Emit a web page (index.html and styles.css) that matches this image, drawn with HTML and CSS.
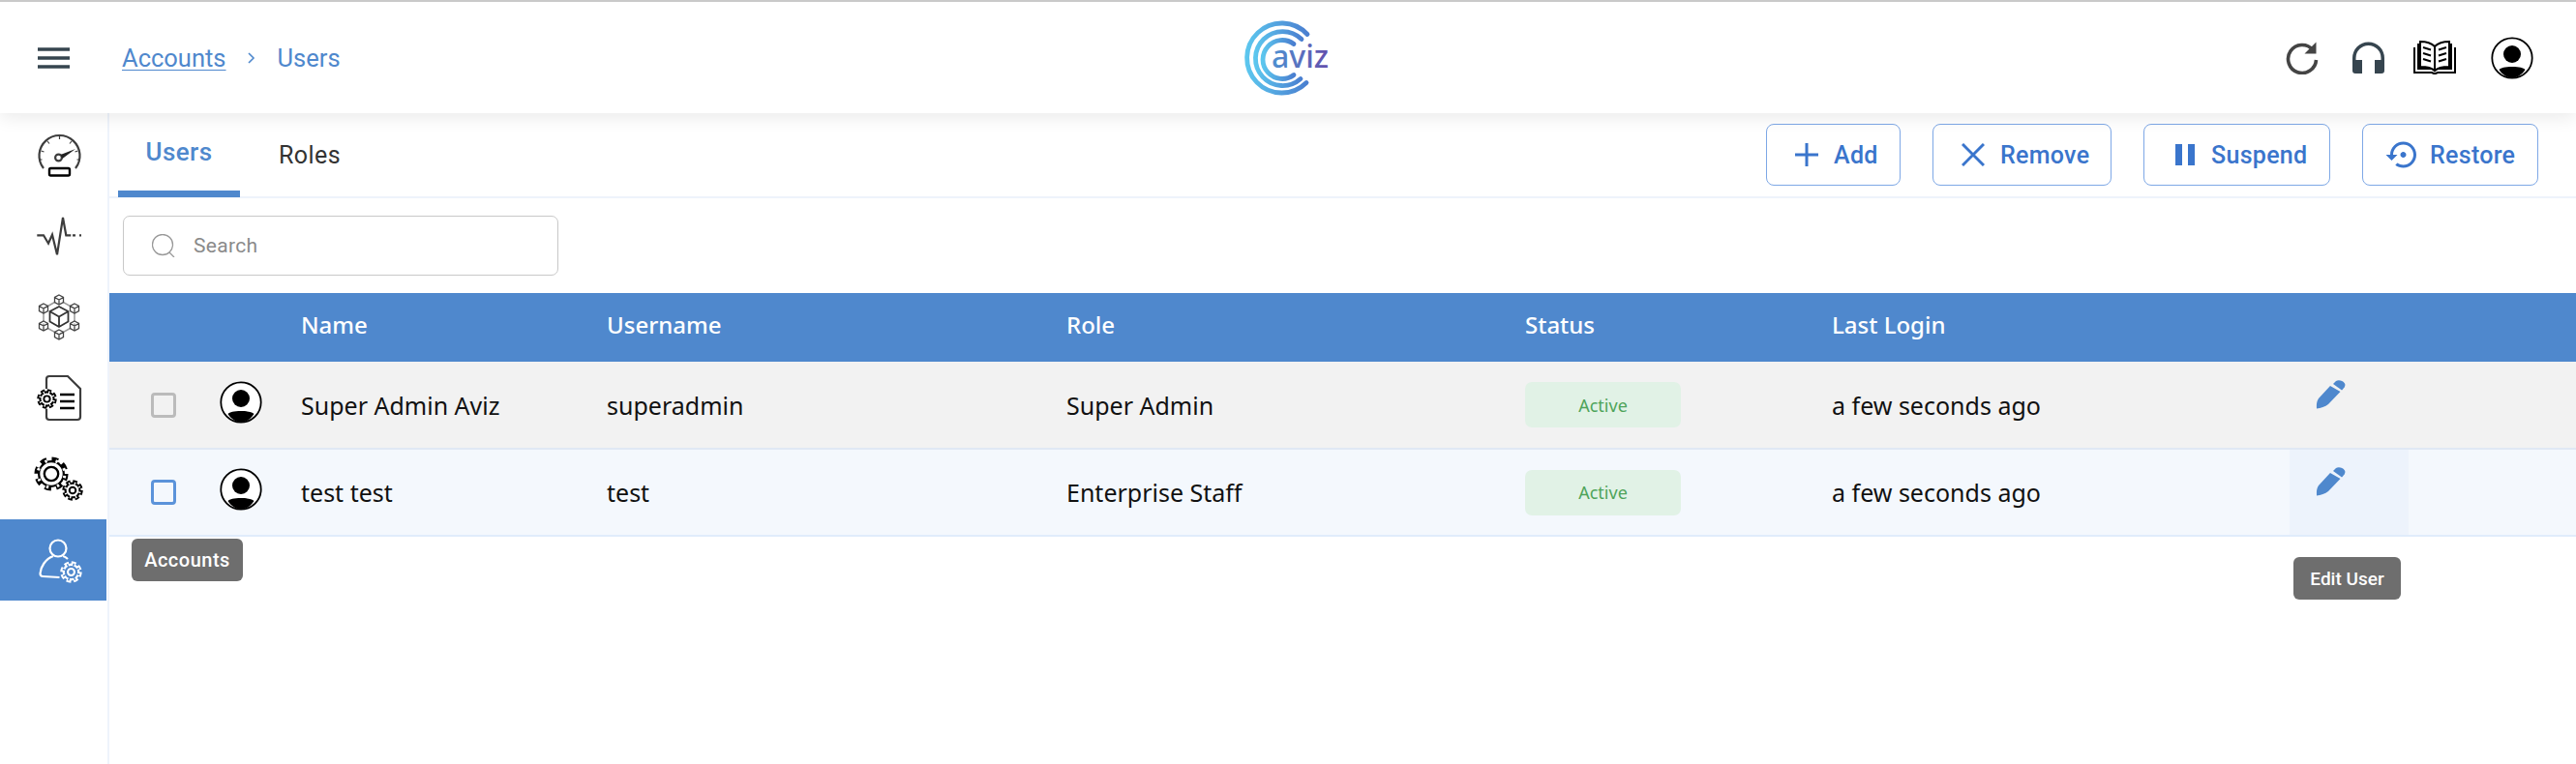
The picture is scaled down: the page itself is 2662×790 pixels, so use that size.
FILE: index.html
```html
<!DOCTYPE html>
<html lang="en">
<head>
<meta charset="utf-8">
<title>Users</title>
<link rel="stylesheet" href="styles.css">
</head>
<body>
<svg class="defs" width="0" height="0" aria-hidden="true">
  <defs>
    <linearGradient id="logoArc" x1="0" y1="0" x2="1" y2="0">
      <stop offset="0" stop-color="#5cc6ee"/><stop offset="1" stop-color="#4a7fd0"/>
    </linearGradient>
    <linearGradient id="logoText" gradientUnits="userSpaceOnUse" x1="1318" y1="0" x2="1374" y2="0">
      <stop offset="0" stop-color="#4f8fd0"/><stop offset="1" stop-color="#6350ad"/>
    </linearGradient>
    <symbol id="gear-lg" viewBox="0 0 40 40">
      <circle class="gear-ink" cx="20" cy="20" r="15.500"/>
      <circle class="gear-teeth" cx="20" cy="20" r="16" stroke-width="7" stroke-dasharray="7 5.570"/>
      <circle class="gear-bg" cx="20" cy="20" r="13"/>
      <circle class="gear-hole" cx="20" cy="20" r="15.500" stroke-width="3.400" stroke-dasharray="2.600 9.970" stroke-dashoffset="-2.200"/>
      <circle class="gear-ring" cx="20" cy="20" r="8" stroke-width="2.600"/>
    </symbol>
    <symbol id="gear-sm" viewBox="0 0 40 40">
      <circle class="gear-ink" cx="20" cy="20" r="15.500"/>
      <circle class="gear-teeth" cx="20" cy="20" r="16" stroke-width="7" stroke-dasharray="8 4.570"/>
      <circle class="gear-bg" cx="20" cy="20" r="11.500"/>
      <circle class="gear-hole" cx="20" cy="20" r="13.500" stroke-width="5" stroke-dasharray="2.400 8.200" stroke-dashoffset="-2.800"/>
      <circle class="gear-ring" cx="20" cy="20" r="6" stroke-width="3.600"/>
    </symbol>
    <symbol id="avatar" viewBox="0 0 44 44">
      <circle cx="22" cy="22" r="20.700" fill="#fff" stroke="#000" stroke-width="1.800"/>
      <circle cx="22" cy="18" r="9" fill="#000"/>
      <path fill="#000" d="M8.500 34c2-2 6-3 13.500-3s11.500 1 13.500 3C32 39.500 27 42.500 22 42.500S12 39.500 8.500 34z"/>
    </symbol>
    <symbol id="pencil" viewBox="0 0 31 30">
      <path fill="#4f88cd" d="M15 6l10.500 6L13 25c-3 2.500-8 4-12 4.500 0-3.500-.5-6.500 2-10.500z"/>
      <path fill="#4f88cd" d="M18 4l3-3c2-1.500 7-1 9 2.500 1 2 0 4-2 6L27 10.500z"/>
    </symbol>
    <path id="cube" d="M0-5l4.500 2.500v5L0 5l-4.500-2.500v-5zM-4.500-2.500L0 0l4.500-2.500M0 0v5"/>
  </defs>
</svg>

<header class="topbar">
  <div class="top-left">
    <svg class="menu-icon" viewBox="0 0 33 22"><path d="M0 2h33M0 11h33M0 20h33"/></svg>
    <nav class="crumbs">
      <a class="crumb-link">Accounts</a>
      <svg class="crumb-sep" viewBox="0 0 8 12"><path d="M1 1l5 5-5 5"/></svg>
      <span>Users</span>
    </nav>
  </div>
  <svg class="logo" viewBox="1285 18.500 92 82" role="img" aria-label="aviz">
    <g class="logo-arcs">
      <path d="M1353 35a36 36 0 1 0-1 50"/>
      <path d="M1347 40a28 28 0 1 0-1 41"/>
      <path d="M1339 45a20 20 0 1 0 0 32"/>
    </g>
    <text class="logo-text" x="1316" y="69">aviz</text>
  </svg>
  <div class="top-right">
    <svg class="ic-refresh" viewBox="0 0 34 34"><path class="refresh-arc" d="M28 8.500A14.500 14.500 0 1 0 31.500 19"/><path class="refresh-head" d="M31.500 0.500v12h-12z"/></svg>
    <svg class="ic-headset" viewBox="0 0 33 33"><path d="M0 30V17a16.500 16.500 0 0 1 33 0v13a3 3 0 0 1-3 3h-7V19h6.500v-2a13 13 0 0 0-26 0v2H10v14H3a3 3 0 0 1-3-3z"/></svg>
    <svg class="ic-book" viewBox="0 0 44 35"><path class="book-out" d="M5 3v26h13c2 0 3 1 4 2 1-1 2-2 4-2h13V3M1 7v26h18l3 1.500L25 33h18V7"/><path class="book-page" d="M22 31V6c-3-3-9-5-15-5v26c6 0 12 1 15 4 3-3 9-4 15-4V1c-6 0-12 2-15 5"/><path class="book-line" d="M10 7l8 2.500M10 13l8 2.500M10 19l8 2.500M34 7l-8 2.500M34 13l-8 2.500M34 19l-8 2.500"/></svg>
    <svg class="ic-avatar"><use href="#avatar"/></svg>
  </div>
</header>

<div class="shell">
  <aside class="sidebar">
    <div class="side-item">
      <svg class="side-svg" viewBox="0 0 48 48"><path class="s2" d="M8 39A21 21 0 1 1 41 39"/><path class="s1" d="M24.500 6v3M12 11l2 2.500M37 11l-2 2.500M5.500 21l3 1M43.500 21l-3 1M3.500 30h3M45.500 30h-3"/><circle class="s2" cx="23.500" cy="28" r="3.400"/><path class="fill-dark" d="M25.500 25L41 19 27.500 29z"/><rect class="s3" x="14" y="39" width="21" height="7.500" rx="1.500"/></svg>
    </div>
    <div class="side-item">
      <svg class="side-svg" viewBox="0 0 48 48"><path class="s2" d="M1.300 24.300H8l5 8.400 4-9 5 20.600L28 6l3.300 18.300h5"/><path class="s2" d="M38 24.300h3M45 24.300h2"/></svg>
    </div>
    <div class="side-item">
      <svg class="side-svg" viewBox="0 0 48 48"><path class="hex-link" d="M24 7L8 16v18l16 9 16-9V16z"/><g class="cubes"><use href="#cube" transform="translate(24 7)"/><use href="#cube" transform="translate(8 16)"/><use href="#cube" transform="translate(40 16)"/><use href="#cube" transform="translate(8 34)"/><use href="#cube" transform="translate(40 34)"/><use href="#cube" transform="translate(24 43)"/></g><path class="core" d="M24 14l9.500 5v10.500L24 35l-9.500-5.500V19zM14.500 19l9.500 5.500 9.500-5.500M24 24.500V35"/></svg>
    </div>
    <div class="side-item">
      <svg class="side-svg" viewBox="0 0 48 48"><path class="s2" d="M11 15V5q0-3 3-3h19l13 13v29q0 3-3 3H14q-3 0-3-3v-8"/><use href="#gear-sm" x="1" y="15" width="21" height="21"/><path class="s3" d="M25 21h15M25 28h15M25 35h15"/></svg>
    </div>
    <div class="side-item">
      <svg class="side-svg" viewBox="0 0 48 48"><use href="#gear-lg" x="-2" y="1" width="36" height="36"/><use href="#gear-sm" x="27" y="25" width="22" height="22"/></svg>
    </div>
    <div class="side-item side-active">
      <svg class="side-svg" viewBox="0 0 48 48"><circle class="w2" cx="24" cy="12" r="8.500"/><path class="w2" d="M19 20C11 23 6 31 5.500 38c0 2 1 3 3 3l17 1M29 20c2 .5 4 2 5 3"/><use href="#gear-sm" x="26" y="25" width="23" height="23"/></svg>
      <div class="tooltip tip-accounts">Accounts</div>
    </div>
  </aside>

  <main class="content">
    <div class="tabbar">
      <div class="tabs">
        <div class="tab tab-on">Users</div>
        <div class="tab">Roles</div>
      </div>
      <div class="actions">
        <button class="btn btn-add"><svg class="btn-ic" viewBox="0 0 24 24"><path d="M12 0v24M0 12h24"/></svg>Add</button>
        <button class="btn btn-remove"><svg class="btn-ic" viewBox="0 0 24 24"><path d="M1 1l22 22M23 1L1 23"/></svg>Remove</button>
        <button class="btn btn-suspend"><svg class="btn-ic" viewBox="0 0 20 22"><path class="bars" d="M0 0h7v22H0zM13 0h7v22h-7z"/></svg>Suspend</button>
        <button class="btn btn-restore"><svg class="btn-ic-lg" viewBox="0 2 22 20"><path d="M14 12c0-1.100-.9-2-2-2s-2 .9-2 2 .9 2 2 2 2-.9 2-2zm-2-9c-4.970 0-9 4.030-9 9H0l4 4 4-4H5c0-3.870 3.130-7 7-7s7 3.130 7 7-3.130 7-7 7c-1.510 0-2.910-.49-4.060-1.300l-1.420 1.440C8.040 20.300 9.940 21 12 21c4.970 0 9-4.030 9-9s-4.030-9-9-9z"/></svg>Restore</button>
      </div>
    </div>

    <div class="searchwrap">
      <label class="search">
        <svg class="search-ic" viewBox="0 0 24 24"><circle cx="11" cy="11" r="10.500"/><path d="M18 19l5 5"/></svg>
        <span class="search-ph">Search</span>
      </label>
    </div>

    <div class="table">
      <div class="row row-head">
        <div></div><div></div>
        <div>Name</div><div>Username</div><div>Role</div><div>Status</div><div>Last Login</div><div></div>
      </div>
      <div class="row row-one">
        <div class="cell-check"><span class="check check-grey"></span></div>
        <div class="cell-avatar"><svg class="row-avatar"><use href="#avatar"/></svg></div>
        <div>Super Admin Aviz</div><div>superadmin</div><div>Super Admin</div>
        <div><span class="badge">Active</span></div>
        <div>a few seconds ago</div>
        <div class="cell-edit"><svg class="pencil"><use href="#pencil"/></svg></div>
      </div>
      <div class="row row-two">
        <div class="cell-check"><span class="check check-blue"></span></div>
        <div class="cell-avatar"><svg class="row-avatar"><use href="#avatar"/></svg></div>
        <div>test test</div><div>test</div><div>Enterprise Staff</div>
        <div><span class="badge">Active</span></div>
        <div>a few seconds ago</div>
        <div class="cell-edit cell-hover"><svg class="pencil"><use href="#pencil"/></svg><div class="tooltip tip-edit">Edit User</div></div>
      </div>
    </div>
  </main>
</div>
</body>
</html>
```

FILE: styles.css
```css
* { box-sizing: border-box; }
html, body { margin: 0; height: 100%; overflow: hidden; }
body {
  background: #fff;
  font-family: Roboto, "Liberation Sans", sans-serif;
  display: flex;
  flex-direction: column;
  height: 790px;
}
.defs { position: absolute; }

/* Top bar */
.topbar {
  position: relative;
  z-index: 2;
  flex: 0 0 117px;
  display: flex;
  align-items: center;
  justify-content: space-between;
  background: #fff;
  border-top: 2px solid #c9c9c9;
  box-shadow: 0 4px 18px rgba(0, 0, 0, .09);
  padding: 0 44px 0 39px;
}
.top-left { flex: 1 1 0; display: flex; align-items: center; gap: 54px; }
.menu-icon { width: 33px; height: 22px; stroke: #36454f; stroke-width: 3.600; fill: none; display: block; }
.crumbs { display: flex; align-items: center; color: #4f88cd; font-size: 25.500px; }
.crumb-link { text-decoration: underline; text-underline-offset: 3px; text-decoration-thickness: 1px; }
.crumb-sep { width: 8px; height: 12px; margin: 0 23px 0 22px; fill: none; stroke: #4f88cd; stroke-width: 1.600; }
.logo { width: 92px; height: 82px; flex: none; overflow: visible; }
.logo-arcs path { fill: none; stroke: url(#logoArc); stroke-width: 4.800; stroke-linecap: round; }
.logo-text { font-family: "Noto Sans", sans-serif; font-size: 32px; font-weight: 500; fill: url(#logoText); }
.top-right { flex: 1 1 0; display: flex; align-items: center; justify-content: flex-end; }
.top-right svg { display: block; }
.ic-refresh { width: 34px; height: 34px; margin-right: 35px; }
.refresh-arc { fill: none; stroke: #444; stroke-width: 3.600; }
.refresh-head { fill: #444; }
.ic-headset { width: 33px; height: 33px; margin-right: 30px; fill: #36454f; }
.ic-book { width: 44px; height: 35px; margin-right: 36px; }
.book-out, .book-page, .book-line { fill: none; stroke: #000; stroke-width: 2; }
.book-page { fill: #fff; }
.ic-avatar { width: 44px; height: 44px; }

/* Shell */
.shell { flex: 1 1 auto; display: flex; min-height: 0; }
.sidebar { flex: 0 0 113px; border-right: 2px solid #eef3fb; }
.side-item {
  --gear-ink: #000;
  --gear-bg: #fff;
  position: relative;
  height: 84px;
  display: flex;
  align-items: center;
  justify-content: center;
  padding-left: 10px;
}
.side-active { --gear-ink: #fff; --gear-bg: #4f88cd; background: #4f88cd; margin-right: 1px; }
.side-svg { width: 48px; height: 48px; display: block; overflow: visible; }
.gear-ink { fill: var(--gear-ink); }
.gear-bg { fill: var(--gear-bg); }
.gear-teeth { fill: none; stroke: var(--gear-ink); }
.gear-hole { fill: none; stroke: var(--gear-bg); }
.gear-ring { fill: none; stroke: var(--gear-ink); }
.s1, .s2, .s3 { fill: none; stroke: #3d3d3d; }
.s1 { stroke-width: 1.200; }
.s2 { stroke-width: 2.200; }
.s3 { stroke: #000; stroke-width: 2.400; }
.hex-link { fill: none; stroke: #999; stroke-width: 1.500; }
.cubes { fill: #fff; stroke: #444; stroke-width: 1.300; }
.core { fill: #fff; stroke: #333; stroke-width: 1.800; }
.fill-dark { fill: #222; }
.w2 { fill: none; stroke: #fff; stroke-width: 2.200; }

/* Tooltip */
.tooltip {
  position: absolute;
  z-index: 3;
  background: #6e6e6e;
  color: #fff;
  border-radius: 6px;
  font-family: Roboto, sans-serif;
  font-size: 19px;
  font-weight: 500;
  display: flex;
  align-items: center;
  justify-content: center;
  height: 44px;
}
.tip-accounts { left: 136px; top: 20px; width: 115px; font-size: 20px; letter-spacing: .5px; }
.tip-edit { left: 4px; top: 111px; width: 111px; }

/* Content */
.content { flex: 1 1 auto; min-width: 0; }
.tabbar {
  display: flex;
  justify-content: space-between;
  height: 88px;
  border-bottom: 2px solid #eef3fb;
  padding: 0 39px 0 9px;
}
.tabs { display: flex; }
.tab {
  width: 126px;
  height: 87px;
  display: flex;
  align-items: center;
  justify-content: center;
  font-size: 25px;
  color: #333;
  margin-right: 9px;
  letter-spacing: .4px;
}
.tab-on {
  color: #4f88cd;
  font-size: 26px;
  font-weight: 500;
  border-bottom: 7px solid #4f88cd;
}
.actions { display: flex; gap: 33px; padding-top: 11px; }
.btn {
  height: 64px;
  display: flex;
  align-items: center;
  gap: 17px;
  background: transparent;
  border: 1px solid #7ea8e6;
  border-radius: 8px;
  font: 500 25px Roboto, sans-serif;
  letter-spacing: .3px;
  color: #3a75cc;
  padding: 0;
}
.btn-add { width: 139px; padding-left: 29px; gap: 16px; }
.btn-remove { width: 185px; padding-left: 29px; gap: 16px; }
.btn-suspend { width: 193px; padding-left: 32px; }
.btn-restore { width: 182px; padding-left: 23px; gap: 12px; }
.btn-ic { width: 24px; height: 24px; fill: none; stroke: #3a75cc; stroke-width: 3; }
.btn-suspend .btn-ic { width: 20px; height: 22px; }
.bars { fill: #3a75cc; stroke: none; }
.btn-ic-lg { width: 34px; height: 30px; fill: #3a75cc; }

.searchwrap { padding: 18px 0 18px 14px; }
.search {
  width: 450px;
  height: 62px;
  display: flex;
  align-items: center;
  border: 1.500px solid #c8c8c8;
  border-radius: 7px;
  padding-left: 29px;
  gap: 19px;
}
.search-ic { width: 24px; height: 24px; fill: none; stroke: #999; stroke-width: 1.300; }
.search-ph { font-size: 21px; color: #8a8a8a; letter-spacing: .3px; }

/* Table */
.table { font-family: "Noto Sans", sans-serif; font-size: 25px; color: #111; }
.row {
  display: grid;
  grid-template-columns: 97px 101px 316px 475px 474px 317px 473px 123px 1fr;
  align-items: center;
}
.row-head { height: 71px; background: #4f88cd; color: #fff; font-size: 24px; font-weight: 500; }
.row-head > div { padding-bottom: 6px; }
.row-one { height: 91px; background: #f2f2f2; border-bottom: 2px solid #e0e8f4; }
.row-two { height: 90px; background: #f4f8fd; border-bottom: 2px solid #e0ecfb; }
.row > div { height: 100%; display: flex; align-items: center; }
.cell-check { padding-left: 43px; }
.check { width: 26px; height: 26px; border: 3px solid #bbb; border-radius: 4px; display: block; background: transparent; }
.check-blue { border-color: #5b93da; }
.cell-avatar { padding-left: 17px; padding-bottom: 6px; }
.row-avatar { width: 44px; height: 44px; display: block; }
.badge {
  width: 161px;
  height: 47px;
  display: flex;
  align-items: center;
  justify-content: center;
  background: #e1f2e6;
  color: #4ea45a;
  font-size: 18px;
  border-radius: 7px;
}
.row > .cell-edit { position: relative; padding: 0 0 22px 27px; }
.row > .cell-hover { background: #edf3fc; }
.pencil { width: 31px; height: 30px; display: block; }
```
